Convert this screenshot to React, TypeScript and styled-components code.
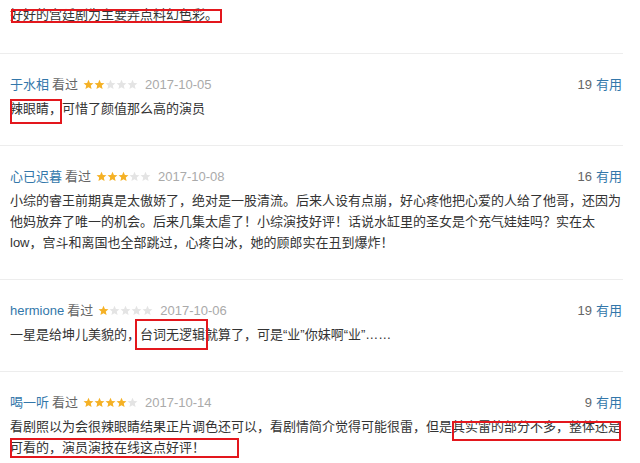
import React from 'react'
import styled, { createGlobalStyle } from 'styled-components'

const GlobalStyle = createGlobalStyle`
  body {
    margin: 0;
    background: #fff;
    font-family: "Liberation Sans", Arial, "Noto Sans CJK SC", sans-serif;
    color: #333;
  }
`

const Page = styled.div`
  width: 623px;
`

const Tail = styled.p`
  margin: 0;
  padding: 4px 1px 28px 10px;
  font-size: 13px;
  line-height: 21px;
  border-bottom: 1px solid #ededed;
`

const Item = styled.div`
  padding: 20px 1px 26px 10px;
  border-bottom: 1px solid #ededed;
  &:last-child {
    border-bottom: none;
  }
`

const Header = styled.div`
  display: flex;
  justify-content: space-between;
  align-items: center;
  height: 21px;
  line-height: 21px;
  font-size: 13px;
`

const Info = styled.div`
  display: flex;
  align-items: center;
  gap: 3px;
`

const Name = styled.a`
  color: #3377aa;
  text-decoration: none;
`

const Watched = styled.span`
  color: #666;
`

const StarRow = styled.span`
  display: inline-flex;
  margin: 0 4px 0 2px;
`

const DateText = styled.span`
  color: #aaa;
`

const Votes = styled.span`
  color: #666;
`

const Useful = styled.a`
  color: #3377aa;
  margin-left: 4px;
`

const Body = styled.p`
  margin: 3px 0 0;
  font-size: 13px;
  line-height: 21px;
  color: #333;
`

type MarkProps = { $t?: number; $r?: number; $b?: number; $l?: number }

const Mark = styled.span<MarkProps>`
  position: relative;
  &::after {
    content: '';
    position: absolute;
    top: ${(p) => -(p.$t ?? 0)}px;
    right: ${(p) => -(p.$r ?? 0)}px;
    bottom: ${(p) => -(p.$b ?? 0)}px;
    left: ${(p) => -(p.$l ?? 0)}px;
    border: 2px solid #e3171d;
    pointer-events: none;
  }
`

const Star = ({ on }: { on: boolean }) => (
  <svg width="11" height="11" viewBox="0 0 24 24">
    <path
      d="M12 1.5l3.1 7.1 7.7.7-5.8 5.1 1.7 7.6L12 18l-6.7 4 1.7-7.6L1.2 9.3l7.7-.7z"
      fill={on ? '#f5b125' : '#e4e4e4'}
    />
  </svg>
)

const Stars = ({ n }: { n: number }) => (
  <StarRow>
    {[0, 1, 2, 3, 4].map((i) => (
      <Star key={i} on={i < n} />
    ))}
  </StarRow>
)

type Comment = {
  name: string
  rating: number
  date: string
  votes: number
  body: React.ReactNode
}

const comments: Comment[] = [
  {
    name: '于水相',
    rating: 2,
    date: '2017-10-05',
    votes: 19,
    body: (
      <>
        <Mark $t={2} $b={8}>辣眼睛，</Mark>可惜了颜值那么高的演员
      </>
    ),
  },
  {
    name: '心已迟暮',
    rating: 3,
    date: '2017-10-08',
    votes: 16,
    body: '小综的睿王前期真是太傲娇了，绝对是一股清流。后来人设有点崩，好心疼他把心爱的人给了他哥，还因为他妈放弃了唯一的机会。后来几集太虐了！小综演技好评！话说水缸里的圣女是个充气娃娃吗？实在太low，宫斗和离国也全部跳过，心疼白冰，她的顾郎实在丑到爆炸！',
  },
  {
    name: 'hermione',
    rating: 1,
    date: '2017-10-06',
    votes: 19,
    body: (
      <>
        一星是给坤儿美貌的，<Mark $t={8} $b={8} $l={5} $r={3}>台词无逻辑</Mark>就算了，可是“业”你妹啊“业”……
      </>
    ),
  },
  {
    name: '喝一听',
    rating: 4,
    date: '2017-10-14',
    votes: 9,
    body: (
      <>
        看剧照以为会很辣眼睛结果正片调色还可以，看剧情简介觉得可能很雷，但是
        <Mark $t={-2} $b={7}>其实雷的部分不多，整体还是</Mark>
        <Mark $t={2} $b={3} $r={34}>可看的，演员演技在线这点好评！</Mark>
      </>
    ),
  },
]

export default function App() {
  return (
    <Page>
      <GlobalStyle />
      <Tail>
        <Mark $t={-2} $b={1} $l={-1} $r={4}>好好的宫廷剧为主要弄点料幻色彩。</Mark>
      </Tail>
      {comments.map((c) => (
        <Item key={c.name}>
          <Header>
            <Info>
              <Name href="#">{c.name}</Name>
              <Watched>看过</Watched>
              <Stars n={c.rating} />
              <DateText>{c.date}</DateText>
            </Info>
            <Votes>
              {c.votes}
              <Useful>有用</Useful>
            </Votes>
          </Header>
          <Body>{c.body}</Body>
        </Item>
      ))}
    </Page>
  )
}
